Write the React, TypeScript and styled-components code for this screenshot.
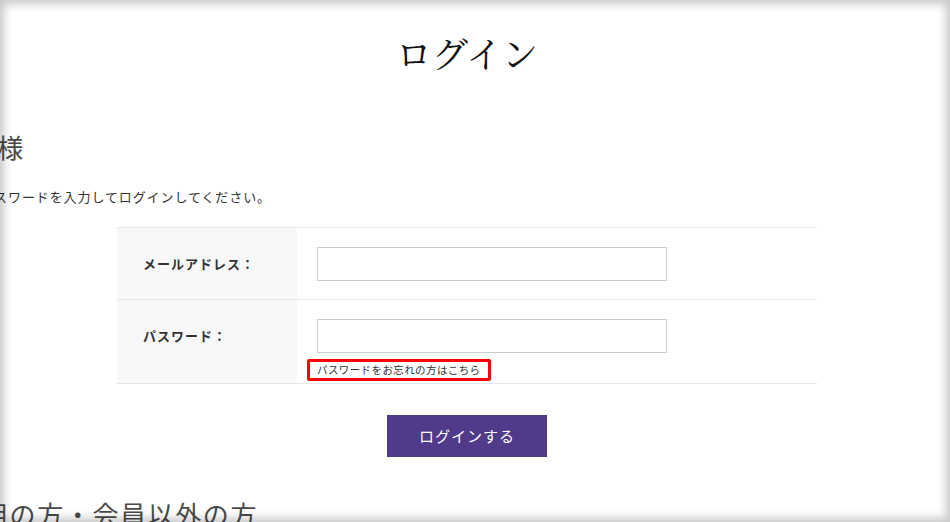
import styled, { createGlobalStyle } from "styled-components";

const Global = createGlobalStyle`
  html, body {
    margin: 0;
    padding: 0;
    background: #fff;
  }
  body {
    font-family: "Noto Sans CJK JP", "Noto Sans", sans-serif;
    color: #333;
  }
`;

const Frame = styled.div`
  position: relative;
  width: 950px;
  height: 522px;
  overflow: hidden;
  background: #fff;

  &::after {
    content: "";
    position: absolute;
    inset: 0;
    pointer-events: none;
    box-shadow: inset 0 0 10px 4px rgba(0, 0, 0, 0.22);
  }
`;

const Page = styled.main`
  padding: 28px 16px 0 0;
  display: flex;
  flex-direction: column;
`;

const Title = styled.h1`
  margin: 0;
  text-align: center;
  font-family: "Noto Serif CJK JP", "IPAMincho", "Liberation Serif", serif;
  font-weight: 400;
  font-size: 36px;
  line-height: 50px;
  color: #111;
`;

const Heading = styled.h2<{ $shift: number; $top: number }>`
  margin: ${(p) => p.$top}px 0 0 ${(p) => p.$shift}px;
  font-size: 26px;
  font-weight: 400;
  line-height: 36px;
  letter-spacing: 1.6px;
  color: #4a4a4a;
  white-space: nowrap;
`;

const Lead = styled.p<{ $shift: number }>`
  margin: 22px 0 0 ${(p) => p.$shift}px;
  font-size: 13px;
  line-height: 20px;
  letter-spacing: 0.9px;
  white-space: nowrap;
  color: #333;
`;

const Form = styled.form`
  width: 700px;
  margin: 20px auto 0;
  display: flex;
  flex-direction: column;
  align-items: center;
`;

const Table = styled.div`
  width: 100%;
  border-top: 1px solid #e6e6e6;
`;

const Row = styled.div`
  display: grid;
  grid-template-columns: 180px 1fr;
  border-bottom: 1px solid #e6e6e6;
`;

const Label = styled.label`
  background: #f8f8f8;
  padding: 26px 0 0 26px;
  font-size: 13px;
  font-weight: 700;
  line-height: 20px;
  letter-spacing: 1px;
  color: #333;
`;

const Cell = styled.div<{ $bottom: number }>`
  padding: 19px 20px ${(p) => p.$bottom}px 20px;
  display: flex;
  flex-direction: column;
  align-items: flex-start;
`;

const Input = styled.input`
  box-sizing: border-box;
  width: 350px;
  height: 34px;
  border: 1px solid #cccccc;
  background: #fff;
  margin: 0;
  padding: 0 8px;
  font-size: 13px;
`;

const Forgot = styled.a`
  margin: 6px 0 0 -10px;
  padding: 0 7px;
  border: 3px solid #ff0000;
  border-radius: 2px;
  font-size: 10.5px;
  line-height: 16px;
  letter-spacing: 0.4px;
  color: #333;
  text-decoration: none;
  white-space: nowrap;
`;

const Submit = styled.button`
  margin-top: 31px;
  width: 160px;
  height: 42px;
  border: none;
  background: #513a8a;
  color: #fff;
  font-family: "Noto Sans CJK JP", sans-serif;
  font-size: 15px;
  line-height: 40px;
  letter-spacing: 1px;
  cursor: pointer;
`;

export default function App() {
  return (
    <>
      <Global />
      <Frame>
        <Page>
          <Title>ログイン</Title>
          <Heading $shift={-58} $top={51}>会員様</Heading>
          <Lead $shift={-131}>メールアドレスとパスワードを入力してログインしてください。</Lead>
          <Form onSubmit={(e) => e.preventDefault()}>
            <Table>
              <Row>
                <Label htmlFor="mail">メールアドレス：</Label>
                <Cell $bottom={18}>
                  <Input id="mail" type="email" />
                </Cell>
              </Row>
              <Row>
                <Label htmlFor="pass">パスワード：</Label>
                <Cell $bottom={2}>
                  <Input id="pass" type="password" />
                  <Forgot href="#">パスワードをお忘れの方はこちら</Forgot>
                </Cell>
              </Row>
            </Table>
            <Submit type="submit">ログインする</Submit>
          </Form>
          <Heading $shift={-156} $top={39}>初めてご利用の方・会員以外の方</Heading>
        </Page>
      </Frame>
    </>
  );
}
